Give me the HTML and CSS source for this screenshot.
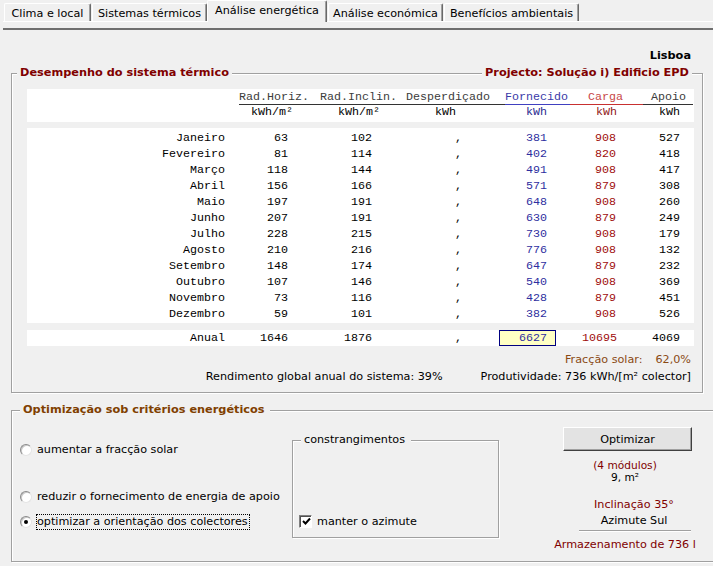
FILE: index.html
```html
<!DOCTYPE html>
<html lang="pt">
<head>
<meta charset="utf-8">
<title>Análise energética</title>
<link rel="stylesheet" href="styles.css">
</head>
<body>
<div class="tabs">
  <div class="tab t1">Clima e local</div>
  <div class="tab t2">Sistemas térmicos</div>
  <div class="tab t3 active">Análise energética</div>
  <div class="tab t4">Análise económica</div>
  <div class="tab t5">Benefícios ambientais</div>
</div>
<div class="edge"></div>
<div class="edge-dark"></div>

<div class="city">Lisboa</div>

<section class="group perf">
  <div class="group-head">
    <span class="legend maroon perf-left">Desempenho do sistema térmico</span>
    <span class="legend maroon perf-right">Projecto: Solução i) Edificio EPD</span>
  </div>

  <div class="tbl thead">
    <div></div>
    <div class="h c2 k">Rad.Horiz.</div>
    <div class="h c3 k">Rad.Inclin.</div>
    <div class="h c4 k">Desperdiçado</div>
    <div class="h c5 b">Fornecido</div>
    <div class="h c6 r">Carga</div>
    <div class="h c7 k">Apoio</div>
    <div></div>
    <div class="u c2">kWh/m²</div>
    <div class="u c3">kWh/m²</div>
    <div class="u c4">kWh</div>
    <div class="u c5">kWh</div>
    <div class="u c6">kWh</div>
    <div class="u c7">kWh</div>
  </div>

  <div class="tbl tbody">
    <div class="m">Janeiro</div><div class="v c2">63</div><div class="v c3">102</div><div class="v c4">,</div><div class="v c5">381</div><div class="v c6">908</div><div class="v c7">527</div>
    <div class="m">Fevereiro</div><div class="v c2">81</div><div class="v c3">114</div><div class="v c4">,</div><div class="v c5">402</div><div class="v c6">820</div><div class="v c7">418</div>
    <div class="m">Março</div><div class="v c2">118</div><div class="v c3">144</div><div class="v c4">,</div><div class="v c5">491</div><div class="v c6">908</div><div class="v c7">417</div>
    <div class="m">Abril</div><div class="v c2">156</div><div class="v c3">166</div><div class="v c4">,</div><div class="v c5">571</div><div class="v c6">879</div><div class="v c7">308</div>
    <div class="m">Maio</div><div class="v c2">197</div><div class="v c3">191</div><div class="v c4">,</div><div class="v c5">648</div><div class="v c6">908</div><div class="v c7">260</div>
    <div class="m">Junho</div><div class="v c2">207</div><div class="v c3">191</div><div class="v c4">,</div><div class="v c5">630</div><div class="v c6">879</div><div class="v c7">249</div>
    <div class="m">Julho</div><div class="v c2">228</div><div class="v c3">215</div><div class="v c4">,</div><div class="v c5">730</div><div class="v c6">908</div><div class="v c7">179</div>
    <div class="m">Agosto</div><div class="v c2">210</div><div class="v c3">216</div><div class="v c4">,</div><div class="v c5">776</div><div class="v c6">908</div><div class="v c7">132</div>
    <div class="m">Setembro</div><div class="v c2">148</div><div class="v c3">174</div><div class="v c4">,</div><div class="v c5">647</div><div class="v c6">879</div><div class="v c7">232</div>
    <div class="m">Outubro</div><div class="v c2">107</div><div class="v c3">146</div><div class="v c4">,</div><div class="v c5">540</div><div class="v c6">908</div><div class="v c7">369</div>
    <div class="m">Novembro</div><div class="v c2">73</div><div class="v c3">116</div><div class="v c4">,</div><div class="v c5">428</div><div class="v c6">879</div><div class="v c7">451</div>
    <div class="m">Dezembro</div><div class="v c2">59</div><div class="v c3">101</div><div class="v c4">,</div><div class="v c5">382</div><div class="v c6">908</div><div class="v c7">526</div>
  </div>

  <div class="tbl tanual">
    <div class="m">Anual</div><div class="v c2">1646</div><div class="v c3">1876</div><div class="v c4">,</div><div class="v c5 total">6627</div><div class="v c6 a6">10695</div><div class="v c7">4069</div>
  </div>

  <div class="fraction"><span>Fracção solar:</span><span class="fval">62,0%</span></div>
  <div class="stats">
    <span>Rendimento global anual do sistema: 39%</span>
    <span>Produtividade: 736 kWh/[m² colector]</span>
  </div>
</section>

<section class="group opt">
  <div class="group-head">
    <span class="legend brown opt-legend">Optimização sob critérios energéticos</span>
  </div>
  <div class="opt-body">
    <div class="opt-left">
      <div class="radio-row r1"><span class="radio"></span><span class="rlabel">aumentar a fracção solar</span></div>
      <div class="radio-row r2"><span class="radio"></span><span class="rlabel">reduzir o fornecimento de energia de apoio</span></div>
      <div class="radio-row r3"><span class="radio on"></span><span class="rlabel focus">optimizar a orientação dos colectores</span></div>
    </div>
    <div class="group cons">
      <div class="group-head">
        <span class="legend cons-legend">constrangimentos</span>
      </div>
      <div class="check-row">
        <span class="check"><svg width="9" height="9" viewBox="0 0 9 9"><polyline points="1,4 3.5,6.5 8,1.5" fill="none" stroke="#000" stroke-width="2"/></svg></span>
        <span>manter o azimute</span>
      </div>
    </div>
    <div class="opt-right">
      <div class="btn">Optimizar</div>
      <div class="mod maroon">(4 módulos)</div>
      <div class="area">9, m²</div>
      <div class="incl maroon">Inclinação 35°</div>
      <div class="azim">Azimute Sul</div>
      <div class="sep"></div>
      <div class="arm maroon">Armazenamento de 736 l</div>
    </div>
  </div>
</section>
</body>
</html>
```

FILE: styles.css
```css
* { box-sizing: border-box; }

html, body {
  margin: 0;
  padding: 0;
}

body {
  width: 713px;
  height: 566px;
  overflow: hidden;
  background: #f0f0f0;
  color: #000;
  font-family: "DejaVu Sans", "Liberation Sans", sans-serif;
  font-size: 11.2px;
}

/* ---------- tabs ---------- */
.tabs {
  display: flex;
  align-items: flex-end;
  height: 21px;
}

.tab {
  height: 18px;
  display: flex;
  align-items: center;
  justify-content: center;
  white-space: nowrap;
  border-top: 1px solid #fff;
  border-left: 1px solid #fff;
  border-right: 1px solid #696969;
  box-shadow: inset -1px 0 0 #a0a0a0;
  border-radius: 2px 2px 0 0;
  padding-top: 1px;
}

.t1 { margin-left: 4px; width: 87px; }
.t2 { margin-left: 1px; width: 115px; }
.t3 { width: 120px; }
.t4 { margin-left: 1px; width: 115px; }
.t5 { margin-left: 1px; width: 135px; }

.tab.active {
  height: 22px;
  margin-bottom: -1px;
  padding-top: 0;
  padding-bottom: 3px;
  position: relative;
  background: #f0f0f0;
}

.edge {
  height: 7px;
  margin-left: 3px;
  border-top: 1px solid #fff;
}

.edge-dark {
  height: 2px;
  margin-left: 3px;
  background: #6f6f6f;
}

/* ---------- headings ---------- */
.city {
  margin-top: 19px;
  height: 14px;
  line-height: 14px;
  text-align: right;
  padding-right: 22px;
  font-weight: bold;
  font-size: 11.3px;
}

.group {
  border: 1px solid #a0a0a0;
  box-shadow: 1px 1px 0 #fff, inset 1px 1px 0 #fff;
}

.group-head {
  display: flex;
  justify-content: space-between;
  height: 14px;
  line-height: 14px;
  margin-top: -8px;
}

.legend {
  background: #f0f0f0;
  white-space: nowrap;
}

.maroon { color: #800000; }
.brown { color: #804000; }

.perf-left, .perf-right, .opt-legend {
  font-weight: bold;
  font-size: 11.3px;
}

.perf {
  margin: 10px 10px 0 11px;
  padding-bottom: 8px;
}

.perf-left { margin-left: 5px; padding: 0 3px; }
.perf-right { margin-right: 10px; padding: 0 3px; }

/* ---------- data table ---------- */
.tbl {
  display: grid;
  grid-template-columns: 208px 81px 87px 102px 65px 73px 51px;
  margin: 0 8px 0 15px;
  background: #fff;
  font-family: "Liberation Mono", "DejaVu Sans Mono", monospace;
  font-size: 11.67px;
  color: #000;
}

.thead {
  margin-top: 9px;
  padding: 1px 0 2px;
}

.h {
  line-height: 14px;
  text-align: right;
  border-bottom: 1px solid #333;
  color: #3c3c3c;
  white-space: nowrap;
}

.h.b { color: #3a3aa8; border-bottom-color: #4040c0; }
.h.r { color: #c84848; border-bottom-color: #c83030; }

.h.c2 { margin-left: 4px; padding-right: 9px; }
.h.c3 { padding-right: 6px; }
.h.c4 { padding-right: 15px; }
.h.c5 { padding-right: 2px; }
.h.c6 { padding-right: 20px; }
.h.c7 { padding-right: 7px; margin-right: 1px; }

.u {
  line-height: 15px;
  text-align: right;
  white-space: nowrap;
}

.u.c2 { padding-right: 23px; }
.u.c3 { padding-right: 23px; }
.u.c4 { padding-right: 49px; }
.u.c5 { padding-right: 23px; color: #2a2a90; }
.u.c6 { padding-right: 26px; color: #901818; }
.u.c7 { padding-right: 14px; }

.tbody {
  margin-top: 6px;
  padding: 2px 0 1px;
  line-height: 16px;
}

.tanual {
  margin-top: 7px;
  line-height: 16px;
}

.m {
  text-align: right;
  padding-right: 10px;
}

.v { text-align: right; }
.v.c2 { padding-right: 28px; }
.v.c3 { padding-right: 31px; }
.v.c4 { padding-right: 43px; }
.v.c5 { padding-right: 23px; color: #2e2ea0; }
.v.c6 { padding-right: 27px; color: #a00c0c; }
.v.c7 { padding-right: 14px; }

.v.a6 { padding-right: 26px; }

.v.total {
  margin-left: -6px;
  margin-right: 14px;
  padding-right: 8px;
  line-height: 14px;
  background: #ffffc4;
  border: 1px solid #000080;
}

/* ---------- summary ---------- */
.fraction {
  margin-top: 7px;
  line-height: 14px;
  text-align: right;
  padding-right: 11px;
  color: #8a4a14;
}

.fval { margin-left: 13px; }

.stats {
  margin-top: 3px;
  line-height: 14px;
  display: flex;
  justify-content: flex-end;
  gap: 38px;
  padding-right: 11px;
  white-space: nowrap;
}

/* ---------- optimisation ---------- */
.opt {
  margin: 17px 0 0 11px;
  height: 152px;
  border-right: none;
}

.opt-legend { margin-left: 8px; padding: 0 5px 0 3px; }

.opt .group-head { justify-content: flex-start; }

.opt-body {
  display: flex;
  align-items: flex-start;
}

.opt-left {
  width: 280px;
  padding-left: 8px;
  padding-top: 25px;
}

.radio-row {
  display: flex;
  align-items: center;
  gap: 4px;
  height: 16px;
  white-space: nowrap;
}

.radio-row.r2 { margin-top: 31px; }
.radio-row.r3 { margin-top: 9px; }

.radio {
  position: relative;
  width: 12px;
  height: 12px;
  flex: none;
  border-radius: 50%;
  background: #fff;
  border: 1px solid;
  border-color: #8a8a8a #e4e4e4 #e4e4e4 #8a8a8a;
  box-shadow: inset 1px 1px 0 #c8c8c8;
}

.radio.on::after {
  content: "";
  position: absolute;
  left: 3px;
  top: 3px;
  width: 4px;
  height: 4px;
  border-radius: 50%;
  background: #000;
}

.rlabel {
  border: 1px dotted transparent;
  line-height: 14px;
  padding-right: 1px;
}

.rlabel.focus { border-color: #000; }

.cons {
  margin-top: 23px;
  width: 207px;
  height: 98px;
}

.cons .group-head { justify-content: flex-start; }
.cons-legend { margin-left: 8px; padding: 0 6px 0 3px; }

.check-row {
  margin-top: 66px;
  padding-left: 6px;
  height: 16px;
  display: flex;
  align-items: center;
  gap: 5px;
}

.check {
  width: 13px;
  height: 13px;
  flex: none;
  display: flex;
  align-items: center;
  justify-content: center;
  background: #fff;
  border: 1px solid;
  border-color: #808080 #fff #fff #808080;
  box-shadow: inset 1px 1px 0 #505050;
}

.check svg { display: block; margin: 1px 0 0 1px; }

.opt-right {
  margin-left: 46px;
  width: 160px;
  padding-top: 10px;
  text-align: center;
  white-space: nowrap;
}

.btn {
  margin-left: 18px;
  width: 129px;
  height: 24px;
  display: flex;
  align-items: center;
  justify-content: center;
  background: #e3e3e3;
  border: 1px solid;
  border-color: #fff #404040 #404040 #fff;
  box-shadow: inset -1px -1px 0 #a0a0a0;
}

.mod {
  margin-top: 8px;
  line-height: 12px;
  font-size: 10.6px;
}

.area {
  line-height: 12px;
  font-size: 10.6px;
}

.incl {
  margin-top: 14px;
  line-height: 16px;
  padding-left: 18px;
}

.azim {
  line-height: 16px;
  padding-left: 18px;
}

.sep {
  margin: 1px 0 0 34px;
  width: 112px;
  border-top: 1px solid #a0a0a0;
  border-bottom: 1px solid #fff;
}

.arm {
  margin-top: 5px;
  line-height: 16px;
}
```
